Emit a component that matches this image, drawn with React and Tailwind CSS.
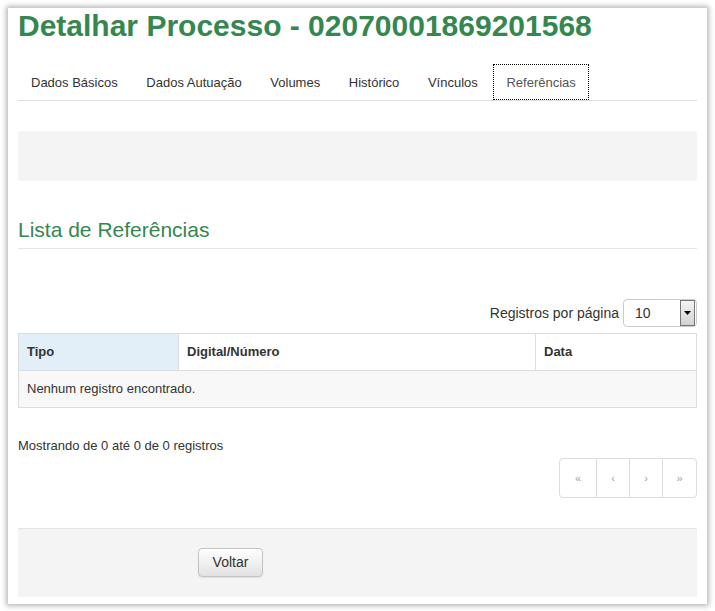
const tabs = ["Dados Básicos", "Dados Autuação", "Volumes", "Histórico", "Vínculos", "Referências"];

export default function App() {
  return (
    <div className="min-h-[611px] bg-white pt-2 pl-2 font-['Liberation_Sans',Arial,sans-serif] text-[#333]">
      <div className="w-[699px] h-[596px] bg-white px-[10px] shadow-[0_0_5px_2px_rgba(0,0,0,0.28)] flex flex-col">
        <h1 className="text-[30px] leading-[35px] font-bold text-[#35874f]">
          Detalhar Processo - 02070001869201568
        </h1>

        <ul className="mt-[21px] flex border-b border-[#ddd] text-[13px]">
          {tabs.map((t) => (
            <li key={t} className="mr-[2.6px]">
              <span
                className={
                  "block px-[13px] leading-[18px] pt-[10px] pb-[8px] " +
                  (t === "Referências" ? "outline-1 outline-dotted outline-black -outline-offset-1 text-[#555]" : "")
                }
              >
                {t}
              </span>
            </li>
          ))}
        </ul>

        <div className="mt-[30px] h-[50px] rounded bg-[#f4f4f4]"></div>

        <h3 className="mt-[37px] text-[21px] leading-[24px] text-[#35874f] pb-[6px] border-b border-[#e5e5e5]">
          Lista de Referências
        </h3>

        <div className="mt-[50px] flex justify-end items-center gap-1 text-[14px]">
          <span>Registros por página</span>
          <div className="w-[74px] h-[28px] border border-[#ccc] rounded flex items-center justify-between pl-[11px] pr-[1px] bg-white">
            <span className="text-[14px]">10</span>
            <div className="w-[15px] h-[26px] border border-[#777] bg-gradient-to-b from-[#f4f4f4] to-[#d2d2d2] flex items-center justify-center">
              <svg width="7" height="4" viewBox="0 0 7 4">
                <path d="M0 0h7L3.5 4z" fill="#000" />
              </svg>
            </div>
          </div>
        </div>

        <table className="mt-[6px] w-full border-collapse border border-[#ddd] text-[13px]">
          <thead>
            <tr className="h-[37px]">
              <th className="w-[160px] border border-[#ddd] bg-[#e2eef8] px-2 text-left font-bold">Tipo</th>
              <th className="w-[357px] border border-[#ddd] px-2 text-left font-bold">Digital/Número</th>
              <th className="border border-[#ddd] px-2 text-left font-bold">Data</th>
            </tr>
          </thead>
          <tbody>
            <tr className="h-[37px] bg-[#f8f8f8]">
              <td colSpan={3} className="px-2">Nenhum registro encontrado.</td>
            </tr>
          </tbody>
        </table>

        <p className="mt-[29px] text-[13px] leading-[18px]">Mostrando de 0 até 0 de 0 registros</p>

        <div className="mt-[3px] flex justify-end">
          <div className="flex h-[40px] border border-[#ddd] rounded text-[11px] text-[#9aa4b0]">
            <span className="w-[36px] flex items-center justify-center">«</span>
            <span className="w-[33px] flex items-center justify-center border-l border-[#ddd]">‹</span>
            <span className="w-[33px] flex items-center justify-center border-l border-[#ddd]">›</span>
            <span className="w-[34px] flex items-center justify-center border-l border-[#ddd]">»</span>
          </div>
        </div>

        <div className="mt-[30px] flex-1 mb-[7px] border-t border-[#e5e5e5] bg-[#f4f4f4] pt-[19px] pl-[180px]">
          <button className="w-[65px] h-[29px] border border-[#c4c4c4] rounded bg-gradient-to-b from-white to-[#e2e2e2] text-[14px] text-[#333] shadow-[0_1px_1px_rgba(0,0,0,0.08)]">
            Voltar
          </button>
        </div>
      </div>
    </div>
  );
}
